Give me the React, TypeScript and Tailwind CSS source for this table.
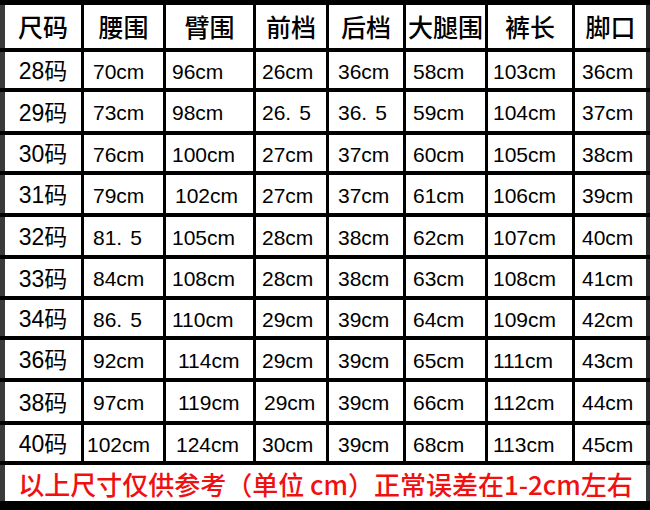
const headers = ["尺码", "腰围", "臂围", "前档", "后档", "大腿围", "裤长", "脚口"];

// per-column left padding for value cells
const pads = ["", "pl-[9px]", "pl-[6px]", "pl-[6px]", "pl-[9px]", "pl-[7px]", "pl-[5px]", "pl-[7px]"];

const rows: string[][] = [
  ["28码", "70cm", "96cm", "26cm", "36cm", "58cm", "103cm", "36cm"],
  ["29码", "73cm", "98cm", "26.5", "36.5", "59cm", "104cm", "37cm"],
  ["30码", "76cm", "100cm", "27cm", "37cm", "60cm", "105cm", "38cm"],
  ["31码", "79cm", "102cm", "27cm", "37cm", "61cm", "106cm", "39cm"],
  ["32码", "81.5", "105cm", "28cm", "38cm", "62cm", "107cm", "40cm"],
  ["33码", "84cm", "108cm", "28cm", "38cm", "63cm", "108cm", "41cm"],
  ["34码", "86.5", "110cm", "29cm", "39cm", "64cm", "109cm", "42cm"],
  ["36码", "92cm", "114cm", "29cm", "39cm", "65cm", "111cm", "43cm"],
  ["38码", "97cm", "119cm", "29cm", "39cm", "66cm", "112cm", "44cm"],
  ["40码", "102cm", "124cm", "30cm", "39cm", "68cm", "113cm", "45cm"],
];

// small hand nudges where the chart's text sits off the usual spot
const nudge: Record<string, string> = {
  "7-2": "pl-[12px]",
  "8-2": "pl-[12px]",
  "9-2": "pl-[10px]",
  "3-2": "pl-[9px]",
  "9-1": "pl-[3px]",
  "8-3": "pl-[8px]",
};

function edge(c: number) {
  if (c === 0) return "border-l-[5px] border-[#3a3a3a]";
  if (c === 7) return "border-r-[4px] border-[#2a2a2a]";
  return "";
}

// the chart prints decimals with a wide gap after the point
function Value({ v }: { v: string }) {
  const dot = v.indexOf(".");
  if (dot < 0) return <>{v}</>;
  return (
    <>
      {v.slice(0, dot + 1)}
      <span className="ml-[8px]">{v.slice(dot + 1)}</span>
    </>
  );
}

export default function App() {
  return (
    <div className="w-[650px] h-[510px] bg-black pt-[5px] pb-[9px]">
      <div className="grid grid-cols-[81px_79px_87px_70px_74px_79px_84px_75px] grid-rows-[43px_36px_39px_36px_38px_38px_37px_36px_38px_39px_36px_36px] gap-x-[3px] gap-y-[4px]">
        {headers.map((h, c) => (
          <div
            key={h}
            className={`bg-white flex items-center justify-center text-[25px] font-medium text-black whitespace-nowrap font-['Noto_Sans_CJK_SC',sans-serif] ${edge(c)}`}
          >
            {h}
          </div>
        ))}
        {rows.map((r, ri) =>
          r.map((v, c) => (
            <div
              key={`${ri}-${c}`}
              className={`bg-white flex items-center pt-[3px] text-[21px] text-black whitespace-nowrap font-['Liberation_Sans','Noto_Sans_CJK_SC',sans-serif] ${
                c === 0 ? "justify-center text-[23px]" : nudge[`${ri}-${c}`] ?? pads[c]
              } ${edge(c)}`}
            >
              <Value v={v} />
            </div>
          ))
        )}
        <div className="col-span-8 bg-white flex items-center justify-center text-[26px] font-medium text-[#f01010] border-l-[5px] border-r-[4px] border-[#3a3a3a] whitespace-nowrap font-['Noto_Sans_CJK_SC',sans-serif]">
          以上尺寸仅供参考（单位 cm）正常误差在1-2cm左右
        </div>
      </div>
    </div>
  );
}
